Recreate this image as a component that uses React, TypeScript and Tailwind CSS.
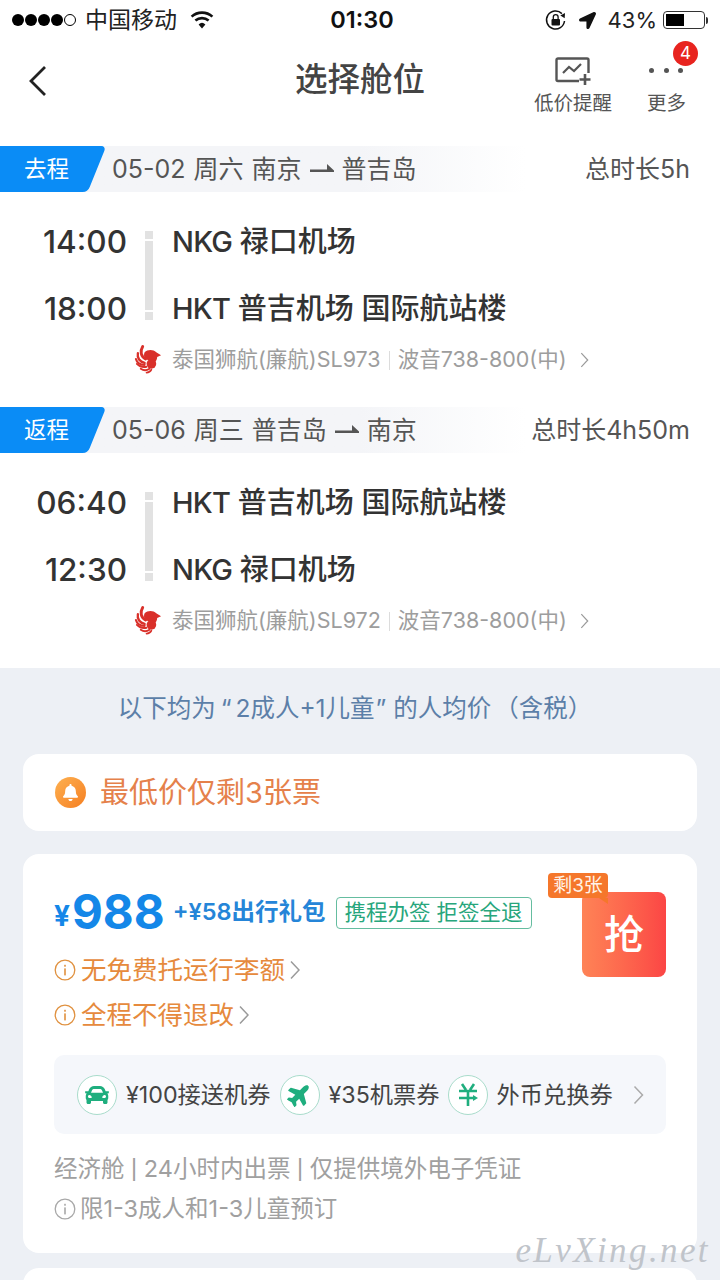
import { FaCar, FaPlane, FaBell, FaLocationArrow } from "react-icons/fa";

const CJK = "font-['Inter','Noto_Sans_CJK_SC',sans-serif]";

function HalfArrow() {
  return (
    <svg width="24" height="12" viewBox="0 0 24 12" className="shrink-0">
      <path d="M0 6.5h17V1l7 6.5v1.5H0z" fill="#555" />
    </svg>
  );
}

function InfoIcon({ color }: { color: string }) {
  return (
    <svg width="22" height="22" viewBox="0 0 22 22" className="shrink-0">
      <circle cx="11" cy="11" r="9.8" fill="none" stroke={color} strokeWidth="1.3" />
      <rect x="10.2" y="9.4" width="1.6" height="7" fill={color} />
      <rect x="10.2" y="5.8" width="1.6" height="1.9" fill={color} />
    </svg>
  );
}

function Chevron({ size = 10, height = 20, color = "#9a9a9a" }: { size?: number; height?: number; color?: string }) {
  return (
    <svg width={size} height={height} viewBox="0 0 10 20" className="shrink-0">
      <path d="M1 1.5 9 10 1 18.5" fill="none" stroke={color} strokeWidth="1.5" />
    </svg>
  );
}

// Airline crest: a red bird with fanned wing feathers
function AirlineLogo() {
  return (
    <svg width="29" height="32" viewBox="0 0 30 32" className="shrink-0">
      <g fill="none" stroke="#d9302a" strokeLinecap="round">
        <path d="M9 2C6 7 7 12 12 15" strokeWidth="3" />
        <path d="M4 9c-1 5 2 9 7 10" strokeWidth="2.4" />
        <path d="M2 15c1 4 4 6 9 6" strokeWidth="2.2" />
        <path d="M3 20c3 3 6 4 10 3" strokeWidth="2" />
        <path d="M7 25c3 2 6 2 9 0" strokeWidth="2" />
        <path d="M13 29c2 0 4-1 5-3" strokeWidth="1.8" />
      </g>
      <path d="M11 8c3-3 9-3 12 0l5 3-4 2c0 3-2 5-3 6l-9-4c-2-2-2-5-1-7z" fill="#d9302a" />
      <circle cx="18" cy="20" r="5" fill="#d9302a" />
    </svg>
  );
}

function SectionHeader({ tag, info, to, total }: { tag: string; info: string; to: string; total: string }) {
  return (
    <div className="flex h-[46px] items-center bg-gradient-to-r from-[#f4f5f8] from-50% to-white to-[73%] pr-[30px] text-[#555]">
      <div className="relative flex h-full w-[112px] shrink-0 items-center">
        <div className="absolute inset-y-0 left-[-40px] w-[137px] -skew-x-[22deg] rounded-[5px] bg-[#0a8cf6]" />
        <span className="relative ml-[24px] text-[22.5px] leading-none text-white">{tag}</span>
      </div>
      <div className="flex items-center gap-[8px] text-[25px] leading-none [word-spacing:1px]">
        <span className="whitespace-pre">{info}</span>
        <HalfArrow />
        <span>{to}</span>
      </div>
      <span className="ml-auto text-[25px] leading-none">{total}</span>
    </div>
  );
}

type Place = { code: string; name: string };

function FlightBlock({ times, places, flight }: { times: [string, string]; places: [Place, Place]; flight: string }) {
  return (
    <div className="mt-[16px]">
      <div className="flex">
        <div className="flex w-[127px] shrink-0 flex-col items-end text-[31.5px] font-medium leading-[67px] text-[#333]">
          <span>{times[0]}</span>
          <span>{times[1]}</span>
        </div>
        <div className="ml-[18px] flex w-[8px] shrink-0 flex-col gap-[2px] self-center">
          <div className="h-[8px] bg-[#e2e2e2]" />
          <div className="h-[69px] bg-[#e2e2e2]" />
          <div className="h-[8px] bg-[#e2e2e2]" />
        </div>
        <div className="ml-[19px] flex flex-col whitespace-pre text-[29px] font-medium leading-[67px] text-[#333]">
          {places.map((p) => (
            <span key={p.code}>
              <span className="tracking-[-0.8px]">{p.code}</span> {p.name}
            </span>
          ))}
        </div>
      </div>
      <div className="ml-[134px] flex h-[36px] items-center text-[21.5px] leading-none text-[#9d9d9d]">
        <AirlineLogo />
        <span className="ml-[9px] whitespace-pre">泰国狮航(廉航){flight}</span>
        <span className="mx-[8px] h-[19px] w-px bg-[#dcdcdc]" />
        <span className="whitespace-pre">波音738-800(中)</span>
        <span className="ml-[13px]">
          <Chevron size={9} height={16} />
        </span>
      </div>
    </div>
  );
}

function Voucher({ icon, label }: { icon: React.ReactNode; label: string }) {
  return (
    <div className="flex items-center gap-[9px]">
      <div className="flex h-[40px] w-[40px] items-center justify-center rounded-full border border-[#a9dccb] bg-white text-[#1fae7e]">
        {icon}
      </div>
      <span className="text-[23.25px] leading-none text-[#444]">{label}</span>
    </div>
  );
}

const NKG: Place = { code: "NKG", name: "禄口机场" };
const HKT: Place = { code: "HKT", name: "普吉机场 国际航站楼" };

export default function App() {
  return (
    <div className={`relative h-[1280px] w-[720px] overflow-hidden bg-white ${CJK}`}>
      {/* status bar */}
      <div className="flex h-[40px] items-center px-[12px] text-black">
        <div className="flex flex-1 items-center">
          <div className="flex items-center gap-[1px]">
            {[0, 1, 2, 3].map((i) => (
              <span key={i} className="h-[12px] w-[12px] rounded-full bg-black" />
            ))}
            <span className="h-[12px] w-[12px] rounded-full border border-black" />
          </div>
          <span className="ml-[9px] text-[23px] leading-none text-[#222]">中国移动</span>
          <svg width="24" height="18" viewBox="0 0 24 18" className="ml-[13px]">
            <path d="M12 17.5 8.6 13.4a5 5 0 0 1 6.8 0z" fill="#111" />
            <path d="M5.4 9.6a10 10 0 0 1 13.2 0M1.6 5.6a15.5 15.5 0 0 1 20.8 0" fill="none" stroke="#111" strokeWidth="2.6" />
          </svg>
        </div>
        <span className="ml-[4px] text-[23.5px] font-semibold leading-none text-[#111]">01:30</span>
        <div className="flex flex-1 items-center justify-end">
          <svg width="24" height="24" viewBox="0 0 24 24">
            <path d="M20.5 13a9 9 0 1 1-2.6-7.4" fill="none" stroke="#111" strokeWidth="1.5" />
            <path d="m21 5-.3 5.2-4.4-2.6z" fill="#111" />
            <rect x="7.5" y="11" width="8.5" height="6.5" rx="1" fill="#111" />
            <path d="M9.3 11V9a2.4 2.4 0 0 1 4.8 0v2" fill="none" stroke="#111" strokeWidth="1.3" />
          </svg>
          <FaLocationArrow className="ml-[11px] text-[17px] text-[#111]" />
          <span className="ml-[12px] text-[22px] leading-none text-[#222]">43%</span>
          <div className="ml-[6px] flex items-center">
            <div className="h-[18px] w-[42px] rounded-[4px] border border-[#333] p-[2px]">
              <div className="h-full w-[18px] bg-black" />
            </div>
            <div className="ml-[1px] h-[7px] w-[2px] rounded-r bg-[#333]" />
          </div>
        </div>
      </div>

      {/* navigation bar */}
      <div className="grid h-[106px] grid-cols-[1fr_auto_1fr]">
        <div className="pl-[28px] pt-[25px]">
          <svg width="20" height="32" viewBox="0 0 20 32">
            <path d="M17 2 3 16l14 14" fill="none" stroke="#222" strokeWidth="2.8" />
          </svg>
        </div>
        <h1 className="pt-[21px] text-[32.5px] font-medium leading-[38px] text-[#444]">选择舱位</h1>
        <div className="relative flex justify-end pr-[34px] pt-[17px] text-[19.5px] leading-none text-[#555]">
          <div className="flex flex-col items-center">
            <svg width="36" height="30" viewBox="0 0 36 30">
              <path d="M24 24H3a1.5 1.5 0 0 1-1.5-1.5V3A1.5 1.5 0 0 1 3 1.5h29A1.5 1.5 0 0 1 33.5 3v13" fill="none" stroke="#555" strokeWidth="2.4" />
              <path d="m8 16 6-6 5 4 7-7" fill="none" stroke="#555" strokeWidth="2.2" />
              <path d="M30 17v11M24.5 22.5h11" stroke="#555" strokeWidth="2.6" />
            </svg>
            <span className="mt-[7px]">低价提醒</span>
          </div>
          <div className="ml-[35px] flex flex-col items-center">
            <div className="flex h-[30px] w-[34px] items-center justify-between pb-[4px]">
              <span className="h-[5px] w-[5px] rounded-full bg-[#555]" />
              <span className="h-[5px] w-[5px] rounded-full bg-[#555]" />
              <span className="h-[5px] w-[5px] rounded-full bg-[#555]" />
            </div>
            <span className="mt-[7px]">更多</span>
          </div>
          <span className="absolute right-[22px] top-[1px] flex h-[25px] w-[25px] items-center justify-center rounded-full bg-[#e8241f] text-[17px] text-white">
            4
          </span>
        </div>
      </div>

      <SectionHeader tag="去程" info="05-02 周六 南京" to="普吉岛" total="总时长5h" />
      <FlightBlock times={["14:00", "18:00"]} places={[NKG, HKT]} flight="SL973" />
      <div className="h-[29px]" />
      <SectionHeader tag="返程" info="05-06 周三 普吉岛" to="南京" total="总时长4h50m" />
      <FlightBlock times={["06:40", "12:30"]} places={[HKT, NKG]} flight="SL972" />
      <div className="h-[29px]" />

      {/* fares */}
      <div className="h-[640px] bg-[#edf0f5] px-[23px]">
        <p className="flex h-[80px] items-center justify-center whitespace-pre pr-[10px] text-[24.5px] leading-none text-[#5c7fa8]">
          以下均为<span className="ml-[5px] mr-[4px]">“</span>2成人+1儿童<span className="ml-[1px] mr-[7px]">”</span>的人均价<span className="ml-[3px]">（含税）</span>
        </p>
        <div className="mt-[6px] flex h-[77px] items-center rounded-[16px] bg-white pl-[32px]">
          <div className="flex h-[31px] w-[31px] items-center justify-center rounded-full bg-gradient-to-br from-[#fdb04f] to-[#f57f1f]">
            <FaBell className="text-[17px] text-white" />
          </div>
          <span className="ml-[14px] text-[29px] leading-none text-[#e5814b]">最低价仅剩3张票</span>
        </div>

        <div className="mt-[23px] h-[399px] rounded-[16px] bg-white px-[31px] pt-[38px]">
          <div className="relative">
            <div className="flex h-[40px] items-center">
              <span className="mt-[7px] text-[28px] font-bold leading-none text-[#1487e8]">¥</span>
              <span className="ml-[2px] text-[47.5px] font-bold leading-none text-[#1487e8]">988</span>
              <span className="ml-[8px] text-[23.5px] font-semibold leading-none text-[#2585d8]">+¥58出行礼包</span>
              <span className="ml-[10px] mt-[2px] flex h-[32px] items-center whitespace-pre rounded-[4px] border border-[#65bda0] px-[8px] text-[21.5px] leading-none text-[#27a67c]">
                携程办签 拒签全退
              </span>
            </div>
            <div className="absolute right-0 top-0 flex h-[85px] w-[84px] items-center justify-center rounded-[8px] bg-gradient-to-r from-[#fe8356] to-[#fb4545] text-[40px] font-medium leading-none text-white">
              抢
            </div>
            <div className="absolute right-[58px] top-[-19px] flex h-[25px] w-[60px] items-center justify-center rounded-[4px] bg-[#f5772b] text-[19px] leading-none text-[#fff3e8]">
              剩3张
              <span className="absolute bottom-[-6px] right-0 border-l-[9px] border-t-[6px] border-l-transparent border-t-[#f5772b]" />
            </div>
            <div className="mt-[15px] flex h-[45px] items-center text-[25.5px] leading-none text-[#e68a3d]">
              <InfoIcon color="#e0913f" />
              <span className="ml-[5px]">无免费托运行李额</span>
              <span className="ml-[5px]"><Chevron /></span>
            </div>
            <div className="flex h-[45px] items-center text-[25.5px] leading-none text-[#e68a3d]">
              <InfoIcon color="#e0913f" />
              <span className="ml-[5px]">全程不得退改</span>
              <span className="ml-[5px]"><Chevron /></span>
            </div>
          </div>

          <div className="mt-[18px] flex h-[79px] items-center rounded-[10px] bg-[#f5f7fb] pl-[23px] pr-[22px]">
            <Voucher icon={<FaCar className="text-[24px]" />} label="¥100接送机券" />
            <div className="ml-[9px]">
              <Voucher icon={<FaPlane className="-rotate-45 text-[25px]" />} label="¥35机票券" />
            </div>
            <div className="ml-[8px]">
              <Voucher
                icon={
                  <svg width="22" height="24" viewBox="0 0 22 24">
                    <path d="m5 1 4 6M17 1l-4 6M2 8h18M2 15h15M11 8v15" fill="none" stroke="currentColor" strokeWidth="2.6" />
                    <path d="m16 12 5 3-5 3z" fill="currentColor" />
                  </svg>
                }
                label="外币兑换券"
              />
            </div>
            <span className="ml-auto"><Chevron size={11} height={20} color="#aaa" /></span>
          </div>

          <p className="mt-[15px] flex h-[40px] items-center whitespace-pre text-[23.5px] leading-none text-[#a0a0a0]">
            经济舱 <span className="font-['Liberation_Sans',sans-serif]">|</span> 24小时内出票 <span className="font-['Liberation_Sans',sans-serif]">|</span> 仅提供境外电子凭证
          </p>
          <div className="flex h-[40px] items-center text-[23.5px] leading-none text-[#a0a0a0]">
            <InfoIcon color="#a8a8a8" />
            <span className="ml-[4px]">限1-3成人和1-3儿童预订</span>
          </div>
        </div>

        <div className="mt-[15px] h-[60px] rounded-t-[16px] bg-white" />
      </div>

      <span className="absolute bottom-[12px] right-[10px] font-['Liberation_Serif',serif] text-[35px] italic leading-none tracking-[2.4px] text-[#c0c4ca]">
        eLvXing.net
      </span>
    </div>
  );
}
